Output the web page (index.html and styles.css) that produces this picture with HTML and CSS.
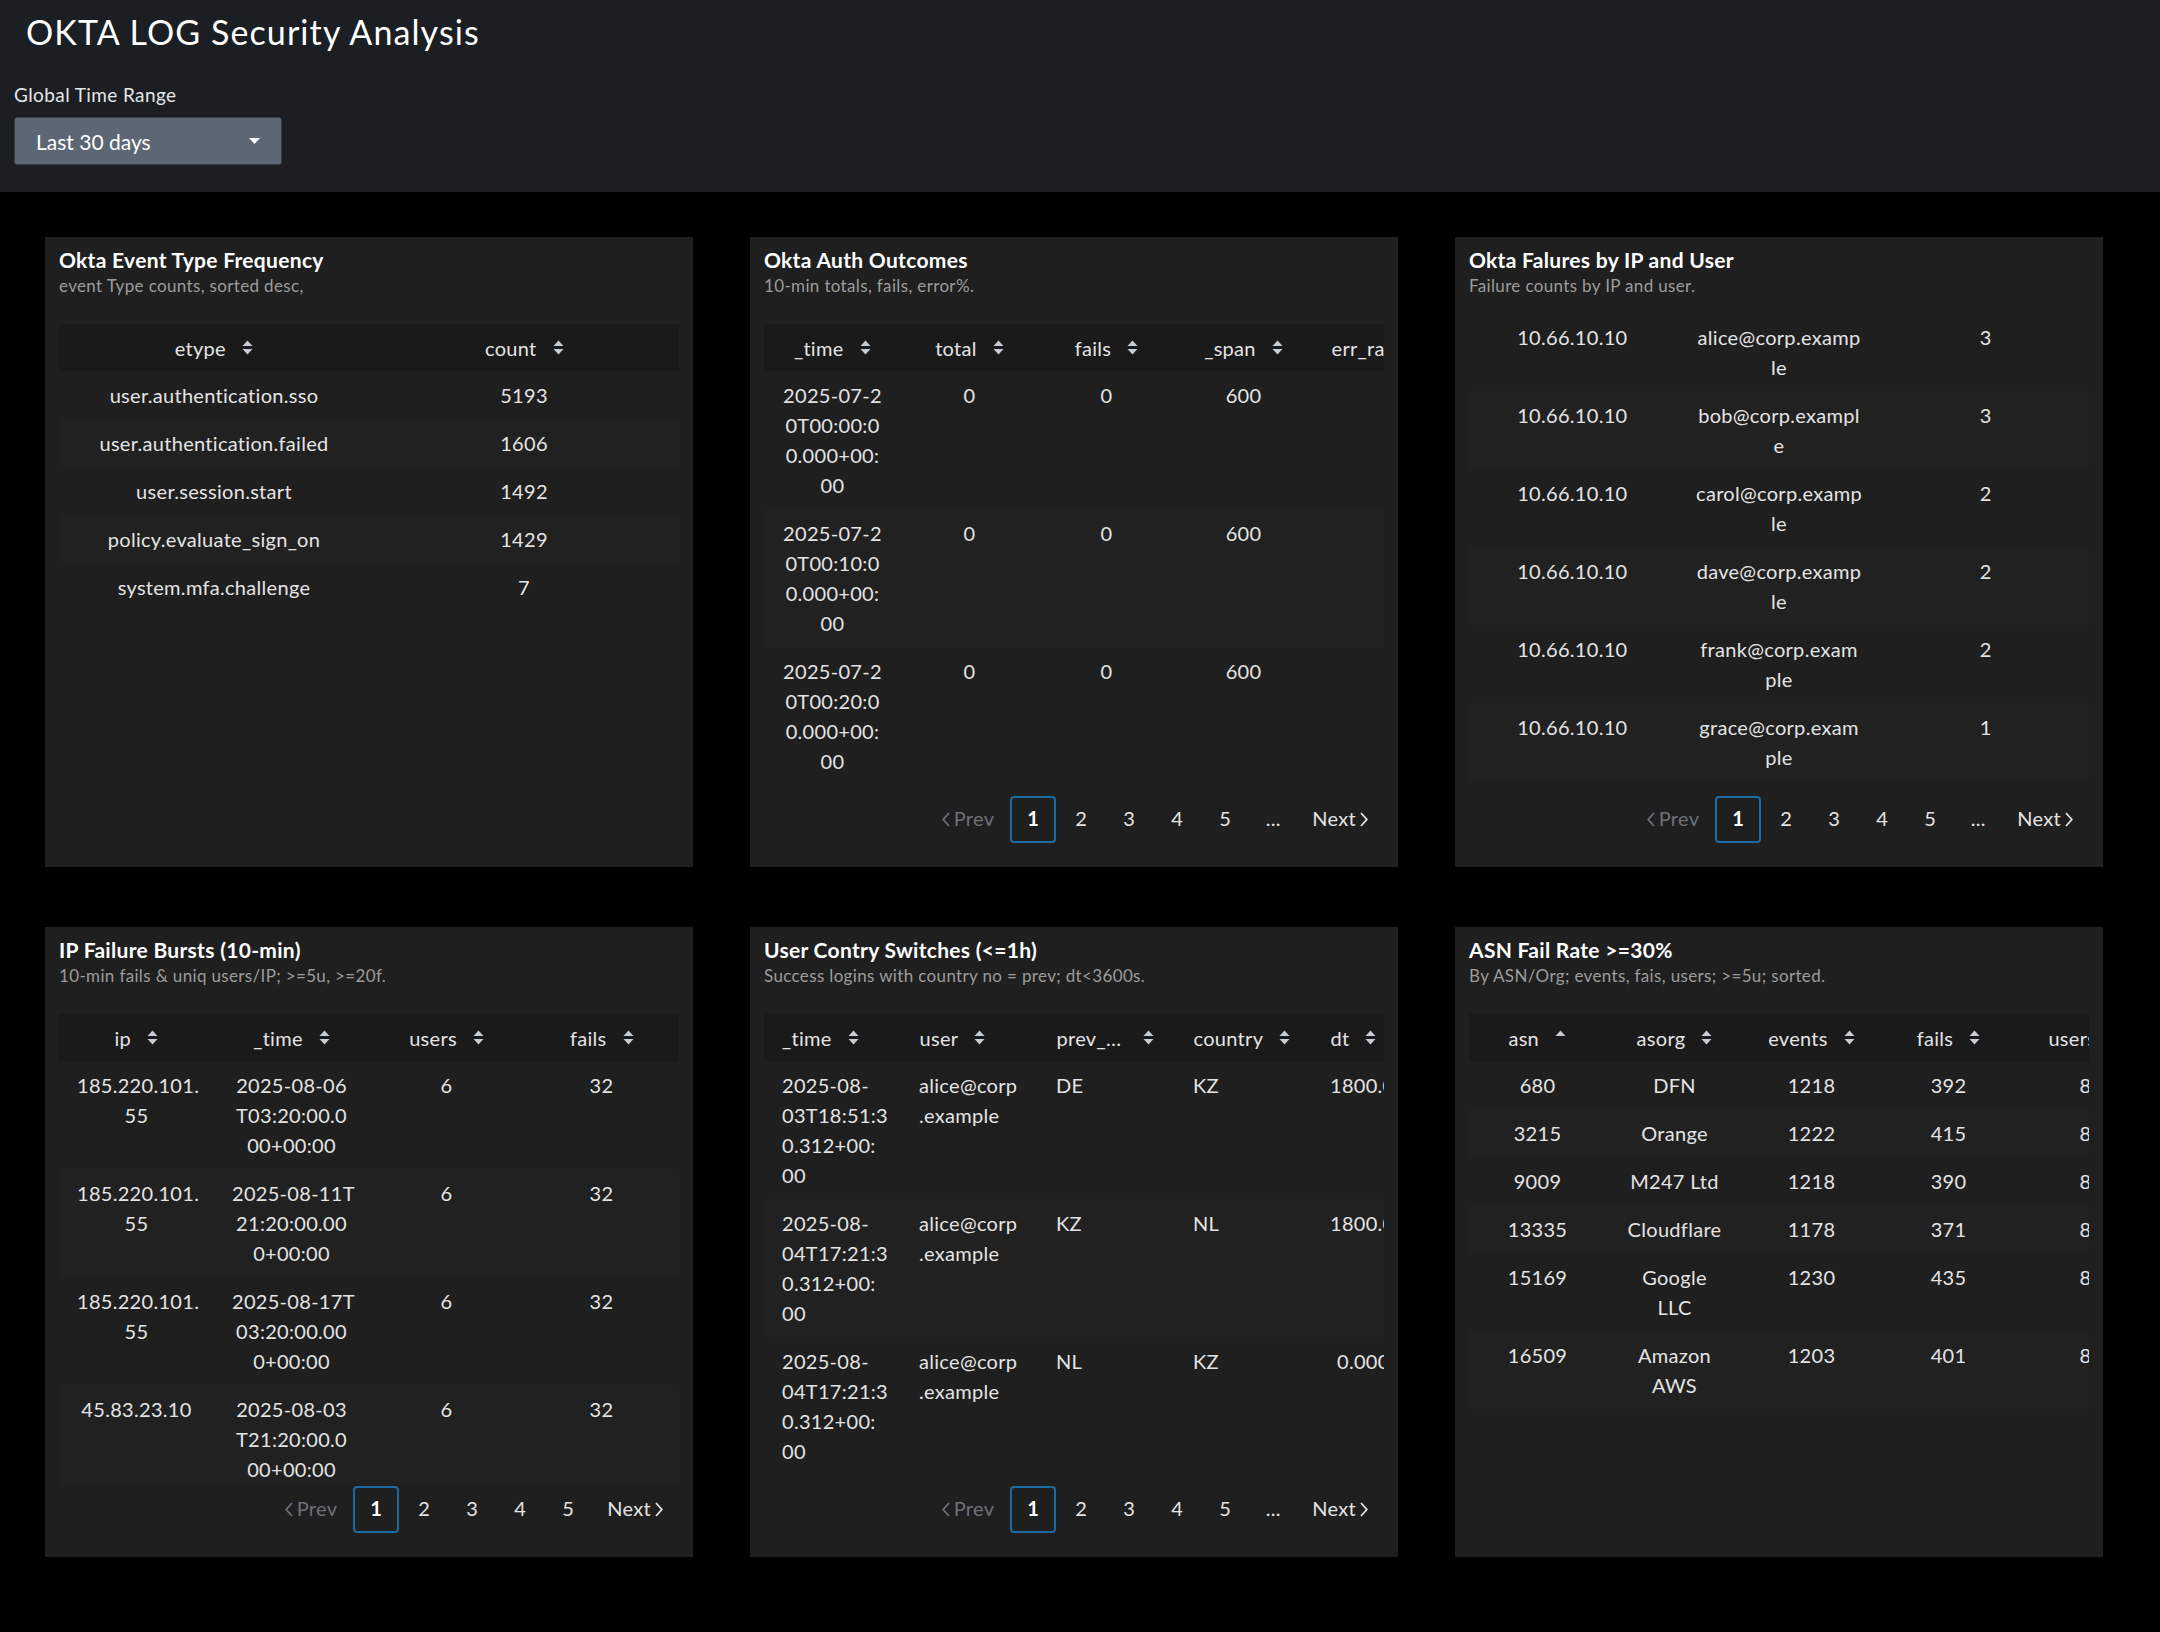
FILE: index.html
```html
<!DOCTYPE html>
<html lang="en">
<head>
<meta charset="utf-8">
<title>OKTA LOG Security Analysis</title>
<link rel="stylesheet" href="styles.css">
</head>
<body>
<header class="dash-header">
  <h1 class="dash-title">OKTA LOG Security Analysis</h1>
  <div class="input">
    <label class="input-label">Global Time Range</label>
    <div class="dropdown">
      <span>Last 30 days</span>
      <svg class="caret" width="11" height="6" viewBox="0 0 11 6"><polygon points="0,0 11,0 5.5,6" fill="#fff"/></svg>
    </div>
  </div>
</header>

<main class="grid">
  <!-- Panel 1 -->
  <section class="panel">
    <h2 class="panel-title">Okta Event Type Frequency</h2>
    <p class="panel-sub">event Type counts, sorted desc,</p>
    <div class="table-wrap">
      <table class="tbl">
        <thead><tr>
          <th><div class="th-in"><span class="lbl">etype</span><svg class="sort" width="11" height="17" viewBox="0 0 11 17"><polygon points="0.5,7 5.5,1.5 10.5,7"/><polygon points="0.5,10 5.5,15.5 10.5,10"/></svg></div></th>
          <th><div class="th-in"><span class="lbl">count</span><svg class="sort" width="11" height="17" viewBox="0 0 11 17"><polygon points="0.5,7 5.5,1.5 10.5,7"/><polygon points="0.5,10 5.5,15.5 10.5,10"/></svg></div></th>
        </tr></thead>
        <tbody>
          <tr><td>user.authentication.sso</td><td>5193</td></tr>
          <tr><td>user.authentication.failed</td><td>1606</td></tr>
          <tr><td>user.session.start</td><td>1492</td></tr>
          <tr><td>policy.evaluate_sign_on</td><td>1429</td></tr>
          <tr><td>system.mfa.challenge</td><td>7</td></tr>
        </tbody>
      </table>
    </div>
  </section>

  <!-- Panel 2 -->
  <section class="panel">
    <h2 class="panel-title">Okta Auth Outcomes</h2>
    <p class="panel-sub">10-min totals, fails, error%.</p>
    <div class="table-wrap">
      <table class="tbl tbl-wide">
        <thead><tr>
          <th><div class="th-in"><span class="lbl">_time</span><svg class="sort" width="11" height="17" viewBox="0 0 11 17"><polygon points="0.5,7 5.5,1.5 10.5,7"/><polygon points="0.5,10 5.5,15.5 10.5,10"/></svg></div></th>
          <th><div class="th-in"><span class="lbl">total</span><svg class="sort" width="11" height="17" viewBox="0 0 11 17"><polygon points="0.5,7 5.5,1.5 10.5,7"/><polygon points="0.5,10 5.5,15.5 10.5,10"/></svg></div></th>
          <th><div class="th-in"><span class="lbl">fails</span><svg class="sort" width="11" height="17" viewBox="0 0 11 17"><polygon points="0.5,7 5.5,1.5 10.5,7"/><polygon points="0.5,10 5.5,15.5 10.5,10"/></svg></div></th>
          <th><div class="th-in"><span class="lbl">_span</span><svg class="sort" width="11" height="17" viewBox="0 0 11 17"><polygon points="0.5,7 5.5,1.5 10.5,7"/><polygon points="0.5,10 5.5,15.5 10.5,10"/></svg></div></th>
          <th><div class="th-in"><span class="lbl">err_rate</span><svg class="sort" width="11" height="17" viewBox="0 0 11 17"><polygon points="0.5,7 5.5,1.5 10.5,7"/><polygon points="0.5,10 5.5,15.5 10.5,10"/></svg></div></th>
        </tr></thead>
        <tbody>
          <tr><td>2025-07-2<br>0T00:00:0<br>0.000+00:<br>00</td><td>0</td><td>0</td><td>600</td><td></td></tr>
          <tr><td>2025-07-2<br>0T00:10:0<br>0.000+00:<br>00</td><td>0</td><td>0</td><td>600</td><td></td></tr>
          <tr><td>2025-07-2<br>0T00:20:0<br>0.000+00:<br>00</td><td>0</td><td>0</td><td>600</td><td></td></tr>
        </tbody>
      </table>
    </div>
    <nav class="pager">
      <span class="pg-prev"><svg width="8" height="15" viewBox="0 0 8 15"><polyline points="7,1 1.2,7.5 7,14"/></svg>Prev</span>
      <span class="pg active">1</span><span class="pg">2</span><span class="pg">3</span><span class="pg">4</span><span class="pg">5</span><span class="pg">...</span>
      <span class="pg-next">Next<svg width="8" height="15" viewBox="0 0 8 15"><polyline points="1,1 6.8,7.5 1,14"/></svg></span>
    </nav>
  </section>

  <!-- Panel 3 -->
  <section class="panel">
    <h2 class="panel-title">Okta Falures by IP and User</h2>
    <p class="panel-sub">Failure counts by IP and user.</p>
    <div class="table-wrap table-wrap-nohead">
      <table class="tbl">
        <tbody>
          <tr><td>10.66.10.10</td><td>alice@corp.examp<br>le</td><td>3</td></tr>
          <tr><td>10.66.10.10</td><td>bob@corp.exampl<br>e</td><td>3</td></tr>
          <tr><td>10.66.10.10</td><td>carol@corp.examp<br>le</td><td>2</td></tr>
          <tr><td>10.66.10.10</td><td>dave@corp.examp<br>le</td><td>2</td></tr>
          <tr><td>10.66.10.10</td><td>frank@corp.exam<br>ple</td><td>2</td></tr>
          <tr><td>10.66.10.10</td><td>grace@corp.exam<br>ple</td><td>1</td></tr>
        </tbody>
      </table>
    </div>
    <nav class="pager">
      <span class="pg-prev"><svg width="8" height="15" viewBox="0 0 8 15"><polyline points="7,1 1.2,7.5 7,14"/></svg>Prev</span>
      <span class="pg active">1</span><span class="pg">2</span><span class="pg">3</span><span class="pg">4</span><span class="pg">5</span><span class="pg">...</span>
      <span class="pg-next">Next<svg width="8" height="15" viewBox="0 0 8 15"><polyline points="1,1 6.8,7.5 1,14"/></svg></span>
    </nav>
  </section>

  <!-- Panel 4 -->
  <section class="panel">
    <h2 class="panel-title">IP Failure Bursts (10-min)</h2>
    <p class="panel-sub">10-min fails &amp; uniq users/IP; &gt;=5u, &gt;=20f.</p>
    <div class="table-wrap">
      <table class="tbl">
        <thead><tr>
          <th><div class="th-in"><span class="lbl">ip</span><svg class="sort" width="11" height="17" viewBox="0 0 11 17"><polygon points="0.5,7 5.5,1.5 10.5,7"/><polygon points="0.5,10 5.5,15.5 10.5,10"/></svg></div></th>
          <th><div class="th-in"><span class="lbl">_time</span><svg class="sort" width="11" height="17" viewBox="0 0 11 17"><polygon points="0.5,7 5.5,1.5 10.5,7"/><polygon points="0.5,10 5.5,15.5 10.5,10"/></svg></div></th>
          <th><div class="th-in"><span class="lbl">users</span><svg class="sort" width="11" height="17" viewBox="0 0 11 17"><polygon points="0.5,7 5.5,1.5 10.5,7"/><polygon points="0.5,10 5.5,15.5 10.5,10"/></svg></div></th>
          <th><div class="th-in"><span class="lbl">fails</span><svg class="sort" width="11" height="17" viewBox="0 0 11 17"><polygon points="0.5,7 5.5,1.5 10.5,7"/><polygon points="0.5,10 5.5,15.5 10.5,10"/></svg></div></th>
        </tr></thead>
        <tbody>
          <tr><td>185.220.101.<br>55</td><td>2025-08-06<br>T03:20:00.0<br>00+00:00</td><td>6</td><td>32</td></tr>
          <tr><td>185.220.101.<br>55</td><td>2025-08-11T<br>21:20:00.00<br>0+00:00</td><td>6</td><td>32</td></tr>
          <tr><td>185.220.101.<br>55</td><td>2025-08-17T<br>03:20:00.00<br>0+00:00</td><td>6</td><td>32</td></tr>
          <tr><td>45.83.23.10</td><td>2025-08-03<br>T21:20:00.0<br>00+00:00</td><td>6</td><td>32</td></tr>
        </tbody>
      </table>
    </div>
    <nav class="pager">
      <span class="pg-prev"><svg width="8" height="15" viewBox="0 0 8 15"><polyline points="7,1 1.2,7.5 7,14"/></svg>Prev</span>
      <span class="pg active">1</span><span class="pg">2</span><span class="pg">3</span><span class="pg">4</span><span class="pg">5</span>
      <span class="pg-next">Next<svg width="8" height="15" viewBox="0 0 8 15"><polyline points="1,1 6.8,7.5 1,14"/></svg></span>
    </nav>
  </section>

  <!-- Panel 5 -->
  <section class="panel">
    <h2 class="panel-title">User Contry Switches (&lt;=1h)</h2>
    <p class="panel-sub">Success logins with country no = prev; dt&lt;3600s.</p>
    <div class="table-wrap">
      <table class="tbl tbl-wide tbl-left">
        <thead><tr>
          <th><div class="th-in"><span class="lbl">_time</span><svg class="sort" width="11" height="17" viewBox="0 0 11 17"><polygon points="0.5,7 5.5,1.5 10.5,7"/><polygon points="0.5,10 5.5,15.5 10.5,10"/></svg></div></th>
          <th><div class="th-in"><span class="lbl">user</span><svg class="sort" width="11" height="17" viewBox="0 0 11 17"><polygon points="0.5,7 5.5,1.5 10.5,7"/><polygon points="0.5,10 5.5,15.5 10.5,10"/></svg></div></th>
          <th><div class="th-in"><span class="lbl lbl-trunc">prev_country</span><svg class="sort" width="11" height="17" viewBox="0 0 11 17"><polygon points="0.5,7 5.5,1.5 10.5,7"/><polygon points="0.5,10 5.5,15.5 10.5,10"/></svg></div></th>
          <th><div class="th-in"><span class="lbl">country</span><svg class="sort" width="11" height="17" viewBox="0 0 11 17"><polygon points="0.5,7 5.5,1.5 10.5,7"/><polygon points="0.5,10 5.5,15.5 10.5,10"/></svg></div></th>
          <th><div class="th-in"><span class="lbl">dt</span><svg class="sort" width="11" height="17" viewBox="0 0 11 17"><polygon points="0.5,7 5.5,1.5 10.5,7"/><polygon points="0.5,10 5.5,15.5 10.5,10"/></svg></div></th>
        </tr></thead>
        <tbody>
          <tr><td>2025-08-<br>03T18:51:3<br>0.312+00:<br>00</td><td>alice@corp<br>.example</td><td>DE</td><td>KZ</td><td>1800.000</td></tr>
          <tr><td>2025-08-<br>04T17:21:3<br>0.312+00:<br>00</td><td>alice@corp<br>.example</td><td>KZ</td><td>NL</td><td>1800.000</td></tr>
          <tr><td>2025-08-<br>04T17:21:3<br>0.312+00:<br>00</td><td>alice@corp<br>.example</td><td>NL</td><td>KZ</td><td class="dt-zero">0.000000</td></tr>
        </tbody>
      </table>
    </div>
    <nav class="pager">
      <span class="pg-prev"><svg width="8" height="15" viewBox="0 0 8 15"><polyline points="7,1 1.2,7.5 7,14"/></svg>Prev</span>
      <span class="pg active">1</span><span class="pg">2</span><span class="pg">3</span><span class="pg">4</span><span class="pg">5</span><span class="pg">...</span>
      <span class="pg-next">Next<svg width="8" height="15" viewBox="0 0 8 15"><polyline points="1,1 6.8,7.5 1,14"/></svg></span>
    </nav>
  </section>

  <!-- Panel 6 -->
  <section class="panel">
    <h2 class="panel-title">ASN Fail Rate &gt;=30%</h2>
    <p class="panel-sub">By ASN/Org; events, fais, users; &gt;=5u; sorted.</p>
    <div class="table-wrap">
      <table class="tbl tbl-wide">
        <thead><tr>
          <th><div class="th-in"><span class="lbl">asn</span><svg class="sort" width="11" height="17" viewBox="0 0 11 17"><polygon points="0.5,7 5.5,1.5 10.5,7"/></svg></div></th>
          <th><div class="th-in"><span class="lbl">asorg</span><svg class="sort" width="11" height="17" viewBox="0 0 11 17"><polygon points="0.5,7 5.5,1.5 10.5,7"/><polygon points="0.5,10 5.5,15.5 10.5,10"/></svg></div></th>
          <th><div class="th-in"><span class="lbl">events</span><svg class="sort" width="11" height="17" viewBox="0 0 11 17"><polygon points="0.5,7 5.5,1.5 10.5,7"/><polygon points="0.5,10 5.5,15.5 10.5,10"/></svg></div></th>
          <th><div class="th-in"><span class="lbl">fails</span><svg class="sort" width="11" height="17" viewBox="0 0 11 17"><polygon points="0.5,7 5.5,1.5 10.5,7"/><polygon points="0.5,10 5.5,15.5 10.5,10"/></svg></div></th>
          <th><div class="th-in"><span class="lbl">users</span><svg class="sort" width="11" height="17" viewBox="0 0 11 17"><polygon points="0.5,7 5.5,1.5 10.5,7"/><polygon points="0.5,10 5.5,15.5 10.5,10"/></svg></div></th>
        </tr></thead>
        <tbody>
          <tr><td>680</td><td>DFN</td><td>1218</td><td>392</td><td>8</td></tr>
          <tr><td>3215</td><td>Orange</td><td>1222</td><td>415</td><td>8</td></tr>
          <tr><td>9009</td><td>M247 Ltd</td><td>1218</td><td>390</td><td>8</td></tr>
          <tr><td>13335</td><td>Cloudflare</td><td>1178</td><td>371</td><td>8</td></tr>
          <tr><td>15169</td><td>Google<br>LLC</td><td>1230</td><td>435</td><td>8</td></tr>
          <tr><td>16509</td><td>Amazon<br>AWS</td><td>1203</td><td>401</td><td>8</td></tr>
        </tbody>
      </table>
    </div>
  </section>
</main>
</body>
</html>
```

FILE: styles.css
```css
* { box-sizing: border-box; }

html, body {
  margin: 0;
  padding: 0;
  background: #000;
}

body {
  width: 2160px;
  min-height: 1632px;
  font-family: Lato, "Open Sans", "Liberation Sans", sans-serif;
  color: #e4e4e4;
}

/* ---------- header ---------- */
.dash-header {
  height: 192px;
  background: #1b1e23;
  padding: 14px 14px 0;
}

.dash-title {
  margin: 0 0 0 12px;
  font-size: 34px;
  line-height: 36px;
  font-weight: 400;
  letter-spacing: 1.1px;
  color: #fff;
}

.input {
  margin-top: 34px;
}

.input-label {
  display: block;
  font-size: 19px;
  line-height: 22px;
  letter-spacing: 0.4px;
  color: #e6e6e6;
}

.dropdown {
  margin-top: 11px;
  width: 268px;
  height: 48px;
  background: #5c6773;
  border: 1px solid #353c44;
  border-radius: 3px;
  padding: 0 21px 0 21px;
  display: flex;
  align-items: center;
  justify-content: space-between;
  font-size: 21px;
  color: #fff;
}

/* ---------- grid ---------- */
.grid {
  display: grid;
  grid-template-columns: repeat(3, 648px);
  grid-auto-rows: 630px;
  column-gap: 57px;
  row-gap: 60px;
  padding: 45px 0 0 45px;
}

.panel {
  background: #1f1f1f;
  padding: 11px 14px 24px;
  display: flex;
  flex-direction: column;
  min-height: 0;
}

.panel-title {
  margin: 0;
  font-size: 21px;
  line-height: 24px;
  font-weight: 700;
  letter-spacing: 0.3px;
  color: #fff;
}

.panel-sub {
  margin: 3px 0 0;
  font-size: 17px;
  line-height: 22px;
  letter-spacing: 0.35px;
  color: #9c9c9c;
}

.table-wrap {
  margin-top: 27px;
  flex: 1;
  min-height: 0;
  overflow: hidden;
}

.table-wrap-nohead {
  margin-top: 16px;
}

/* ---------- tables ---------- */
.tbl {
  width: 100%;
  border-collapse: collapse;
  table-layout: fixed;
  font-size: 20px;
  letter-spacing: 0.3px;
}

.tbl-wide {
  width: 685px;
}

.tbl th {
  height: 47px;
  padding: 0 18px;
  background: #1a1a1a;
  font-weight: 400;
  color: #e4e4e4;
  white-space: nowrap;
}

.tbl th + th {
  border-left: 1px solid #181c21;
}

.th-in {
  display: flex;
  align-items: center;
  justify-content: center;
  gap: 16px;
  line-height: 30px;
}

.lbl-trunc {
  display: inline-block;
  max-width: 70px;
  overflow: hidden;
  text-overflow: ellipsis;
  white-space: nowrap;
}

.sort {
  flex: none;
  fill: #c5ccd3;
}

.tbl td {
  padding: 9px 18px;
  line-height: 30px;
  text-align: center;
  vertical-align: top;
  white-space: nowrap;
  color: #e4e4e4;
}

.tbl tbody tr:nth-child(even) td {
  background: #212121;
}

.tbl-left td {
  text-align: left;
}

.tbl-left .th-in {
  justify-content: flex-start;
}

.tbl td.dt-zero {
  padding-left: 25px;
}

/* ---------- pager ---------- */
.pager {
  display: flex;
  justify-content: flex-end;
  align-items: center;
  gap: 2px;
  height: 47px;
  padding-right: 2px;
  font-size: 20px;
  letter-spacing: 0.3px;
  color: #e4e4e4;
}

.pg {
  width: 46px;
  height: 47px;
  padding-bottom: 3px;
  display: flex;
  align-items: center;
  justify-content: center;
}

.pg.active {
  border: 2px solid #1d69a2;
  border-radius: 4px;
  font-weight: 700;
  color: #fff;
}

.pg-prev,
.pg-next {
  display: flex;
  align-items: center;
  gap: 4px;
  padding: 0 14px 3px;
  height: 47px;
}

.pg-prev {
  color: #6c7179;
}

.pg-prev svg,
.pg-next svg {
  fill: none;
  stroke-width: 1.8;
  margin-top: 3px;
}

.pg-prev svg { stroke: #6c7179; }
.pg-next svg { stroke: #e4e4e4; }
```
